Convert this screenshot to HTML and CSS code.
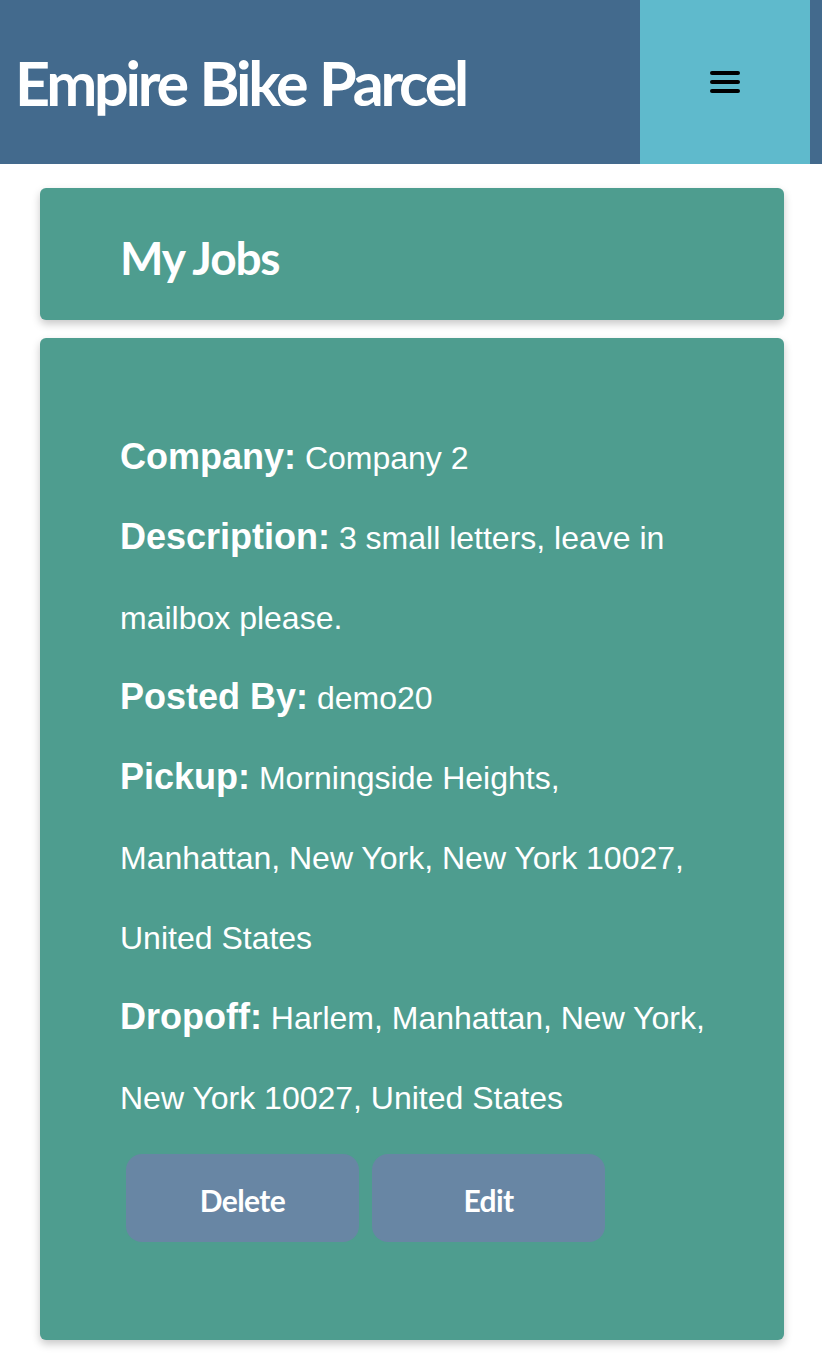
FILE: index.html
```html
<!DOCTYPE html>
<html>
<head>
<meta charset="utf-8">
<link rel="stylesheet" href="styles.css">
</head>
<body>
<header class="topbar">
  <h1 class="brand">Empire Bike Parcel</h1>
  <button class="menu-btn" aria-label="Menu">
    <svg width="30" height="24" viewBox="0 0 30 24">
      <rect x="0" y="2" width="30" height="4" rx="2" fill="#000"/>
      <rect x="0" y="11" width="30" height="4" rx="2" fill="#000"/>
      <rect x="0" y="20" width="30" height="4" rx="2" fill="#000"/>
    </svg>
  </button>
</header>
<main class="content">
  <section class="card title-card">
    <h2 class="card-title">My Jobs</h2>
  </section>
  <section class="card job-card">
    <p class="field"><b class="label">Company:</b> Company 2</p>
    <p class="field"><b class="label">Description:</b> 3 small letters, leave in mailbox please.</p>
    <p class="field"><b class="label">Posted By:</b> demo20</p>
    <p class="field"><b class="label">Pickup:</b> Morningside Heights, Manhattan, New York, New York 10027, United States</p>
    <p class="field"><b class="label">Dropoff:</b> Harlem, Manhattan, New York, New York 10027, United States</p>
    <div class="actions">
      <button class="action-btn">Delete</button>
      <button class="action-btn">Edit</button>
    </div>
  </section>
</main>
</body>
</html>
```
FILE: styles.css
```css
* { box-sizing: border-box; }
html, body { margin: 0; padding: 0; background: #ffffff; }
body { font-family: "Liberation Sans", Arial, sans-serif; }

.topbar {
  height: 164px;
  background: #436a8d;
  display: flex;
  align-items: stretch;
  justify-content: space-between;
  padding-right: 12px;
}
.brand {
  margin: 0;
  padding-left: 15px;
  align-self: center;
  font-family: Lato, "Open Sans", sans-serif;
  font-weight: 700;
  font-size: 61px;
  letter-spacing: -3.2px;
  word-spacing: 2px;
  color: #ffffff;
  line-height: 1;
}
.menu-btn {
  width: 170px;
  border: none;
  margin: 0;
  padding: 0;
  background: #5fbacc;
  display: flex;
  align-items: center;
  justify-content: center;
}
.menu-btn svg { display: block; margin-top: -2px; }

.content {
  padding: 24px 38px 14px 40px;
  display: flex;
  flex-direction: column;
  gap: 18px;
}
.card {
  background: #4e9d8f;
  border-radius: 6px;
  box-shadow: 0 4px 8px rgba(0, 0, 0, 0.22);
  color: #ffffff;
}
.title-card {
  height: 132px;
  padding: 0 80px;
  display: flex;
  align-items: center;
}
.card-title {
  margin: 0;
  font-family: Lato, "Open Sans", sans-serif;
  font-weight: 700;
  font-size: 46px;
  letter-spacing: -1.2px;
  line-height: 1;
  padding-top: 8px;
}
.job-card {
  height: 1002px;
  padding: 80px 74px 0 80px;
}
.field {
  margin: 0;
  font-size: 32px;
  line-height: 80px;
}
.label {
  font-size: 36px;
  font-weight: 700;
  line-height: 1;
}
.actions {
  display: flex;
  gap: 13px;
  margin: 16px 0 0 6px;
}
.action-btn {
  width: 233px;
  height: 88px;
  border: none;
  border-radius: 16px;
  background: #6886a4;
  color: #ffffff;
  font-family: Lato, "Open Sans", sans-serif;
  font-weight: 700;
  font-size: 30px;
  letter-spacing: -0.6px;
  padding: 3px 0 0;
}
```
